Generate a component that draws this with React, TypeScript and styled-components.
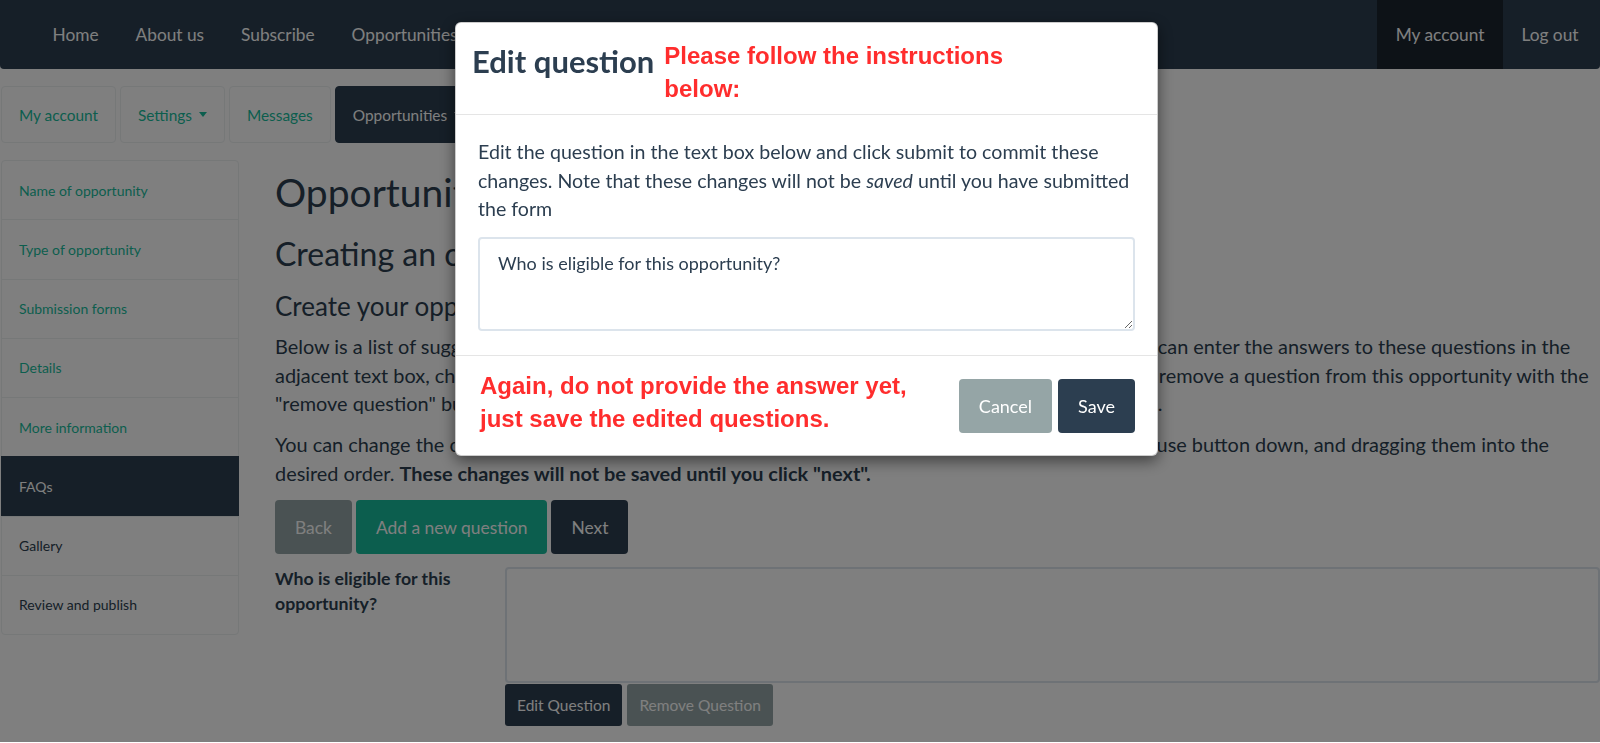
import React from "react";
import styled, { createGlobalStyle } from "styled-components";

const Global = createGlobalStyle`
  html, body { margin: 0; padding: 0; background: #ffffff; }
  body {
    font-family: Lato, "Noto Sans", "Liberation Sans", sans-serif;
    color: #2c3e50;
    overflow: hidden;
    height: 743px;
  }
  *, *::before, *::after { box-sizing: border-box; }
`;

const Page = styled.div`
  width: 1600px;
  height: 743px;
  display: flex;
  flex-direction: column;
`;

const Navbar = styled.nav`
  height: 69px;
  background: #2c3e50;
  border-radius: 0 0 4px 4px;
  display: flex;
  justify-content: space-between;
  padding: 0 3px 0 34px;
`;

const NavGroup = styled.div`
  display: flex;
`;

const NavLink = styled.a<{ $active?: boolean }>`
  display: flex;
  align-items: center;
  padding: 0 18.5px;
  font-size: 17.3px;
  color: #ffffff;
  text-decoration: none;
  background: ${(p) => (p.$active ? "#1a242f" : "transparent")};
`;

const Tabs = styled.div`
  display: flex;
  gap: 4px;
  margin: 17px 0 0 1px;
`;

const Tab = styled.a<{ $active?: boolean }>`
  height: 57px;
  display: flex;
  align-items: center;
  padding: 0 17px;
  font-size: 15.4px;
  border: 1px solid ${(p) => (p.$active ? "#2c3e50" : "#ecf0f1")};
  border-radius: 4px;
  background: ${(p) => (p.$active ? "#2c3e50" : "#ffffff")};
  color: ${(p) => (p.$active ? "#ffffff" : "#18bc9c")};
  text-decoration: none;
`;

const Caret = styled.span`
  display: inline-block;
  margin-left: 7px;
  border-top: 5px solid currentColor;
  border-left: 4px solid transparent;
  border-right: 4px solid transparent;
`;

const Body = styled.div`
  display: flex;
  margin-top: 17px;
  align-items: flex-start;
`;

const Sidebar = styled.div`
  width: 238px;
  margin-left: 1px;
  display: flex;
  flex-direction: column;
`;

const SideItem = styled.a<{ $tone: "link" | "active" | "plain" }>`
  height: 60.25px;
  display: flex;
  align-items: center;
  padding: 0 17px;
  font-size: 14px;
  text-decoration: none;
  border: 1px solid ${(p) => (p.$tone === "active" ? "#2c3e50" : "#ecf0f1")};
  margin-bottom: -1px;
  background: ${(p) => (p.$tone === "active" ? "#2c3e50" : "#ffffff")};
  color: ${(p) =>
    p.$tone === "active" ? "#ffffff" : p.$tone === "link" ? "#18bc9c" : "#2c3e50"};
  &:first-child { border-radius: 4px 4px 0 0; }
  &:last-child { border-radius: 0 0 4px 4px; margin-bottom: 0; }
`;

const Main = styled.main`
  flex: 1;
  margin-left: 36px;
  min-width: 0;
`;

const H1 = styled.h1`
  font-size: 39px;
  line-height: 43px;
  font-weight: 400;
  margin: 11px 0 0;
  white-space: nowrap;
`;

const H2 = styled.h2`
  font-size: 32px;
  line-height: 35px;
  font-weight: 400;
  margin: 22px 0 0;
  white-space: nowrap;
`;

const H3 = styled.h3`
  font-size: 26px;
  line-height: 29px;
  font-weight: 400;
  margin: 21px 0 11px;
  white-space: nowrap;
`;

const Para = styled.p`
  font-size: 19.9px;
  line-height: 28.6px;
  margin: 0 0 12.4px;
  white-space: nowrap;
`;

const ButtonRow = styled.div`
  display: flex;
  gap: 4px;
  margin-top: 13px;
`;

type Tone = "grey" | "green" | "dark";
const toneBg: Record<Tone, string> = {
  grey: "#95a5a6",
  green: "#18bc9c",
  dark: "#2c3e50",
};

const Btn = styled.button<{ $tone: Tone }>`
  height: 54px;
  padding: 0 20px;
  border: none;
  border-radius: 4px;
  font-family: Lato, "Noto Sans", sans-serif;
  font-size: 17.4px;
  color: #ffffff;
  background: ${(p) => toneBg[p.$tone]};
`;

const SmallBtn = styled.button<{ $tone: Tone }>`
  height: 42px;
  padding: 0 12px;
  border: none;
  border-radius: 3px;
  font-family: Lato, "Noto Sans", sans-serif;
  font-size: 15.5px;
  color: #ffffff;
  background: ${(p) => toneBg[p.$tone]};
`;

const QuestionRow = styled.div`
  display: flex;
  margin-top: 13px;
`;

const QLabel = styled.label`
  width: 230px;
  flex: none;
  font-size: 17.7px;
  font-weight: 700;
  line-height: 25px;
  margin-top: -1px;
`;

const QField = styled.div`
  flex: 1;
  display: flex;
  flex-direction: column;
`;

const PageTextarea = styled.textarea`
  display: block;
  width: 100%;
  height: 116px;
  border: 2px solid #dce4ec;
  border-radius: 4px;
  resize: none;
  background: #fff;
`;

const QButtons = styled.div`
  display: flex;
  gap: 5px;
  margin-top: 1px;
`;

const Backdrop = styled.div`
  position: fixed;
  left: 0;
  top: 0;
  right: 0;
  bottom: 1px;
  background: rgba(0, 0, 0, 0.5);
`;

const Modal = styled.div`
  position: fixed;
  left: 455px;
  top: 22px;
  width: 703px;
  background: #ffffff;
  border: 1px solid rgba(0, 0, 0, 0.2);
  border-radius: 6px;
  box-shadow: 0 5px 15px rgba(0, 0, 0, 0.5);
`;

const ModalHeader = styled.div`
  display: flex;
  align-items: flex-start;
  padding: 16px 16px 9px 16px;
  border-bottom: 1px solid #e5e5e5;
`;

const ModalTitle = styled.h4`
  margin: 3px 0 0;
  font-size: 31px;
  line-height: 38px;
  font-weight: 700;
  color: #2c3e50;
`;

const Annotation = styled.div`
  font-family: "Liberation Sans", Arial, sans-serif;
  font-weight: 700;
  font-size: 24px;
  line-height: 33px;
  color: #ff2d2d;
`;

const HeaderNote = styled(Annotation)`
  margin-left: 10px;
`;

const ModalBody = styled.div`
  padding: 23px 22px 24px 22px;
`;

const ModalText = styled.p`
  margin: 0 0 13px;
  font-size: 19.6px;
  line-height: 28.6px;
  color: #2c3e50;
`;

const ModalTextarea = styled.textarea`
  display: block;
  width: 100%;
  height: 94px;
  border: 2px solid #dce4ec;
  border-radius: 4px;
  padding: 12px 18px;
  font-family: Lato, "Noto Sans", sans-serif;
  font-size: 18px;
  line-height: 25.7px;
  color: #2c3e50;
  background: #fff;
  resize: vertical;
  outline: none;
`;

const ModalFooter = styled.div`
  display: flex;
  align-items: flex-start;
  justify-content: space-between;
  padding: 13px 22px 20px 24px;
  border-top: 1px solid #e5e5e5;
`;

const FooterButtons = styled.div`
  display: flex;
  gap: 6px;
  margin-top: 10px;
`;

const FooterBtn = styled(Btn)`
  font-size: 18px;
`;

export default function App() {
  return (
    <>
      <Global />
      <Page>
        <Navbar>
          <NavGroup>
            <NavLink>Home</NavLink>
            <NavLink>About us</NavLink>
            <NavLink>Subscribe</NavLink>
            <NavLink>Opportunities</NavLink>
          </NavGroup>
          <NavGroup>
            <NavLink $active>My account</NavLink>
            <NavLink>Log out</NavLink>
          </NavGroup>
        </Navbar>
        <Tabs>
          <Tab>My account</Tab>
          <Tab>
            Settings<Caret />
          </Tab>
          <Tab>Messages</Tab>
          <Tab $active>
            Opportunities<Caret />
          </Tab>
        </Tabs>
        <Body>
          <Sidebar>
            <SideItem $tone="link">Name of opportunity</SideItem>
            <SideItem $tone="link">Type of opportunity</SideItem>
            <SideItem $tone="link">Submission forms</SideItem>
            <SideItem $tone="link">Details</SideItem>
            <SideItem $tone="link">More information</SideItem>
            <SideItem $tone="active">FAQs</SideItem>
            <SideItem $tone="plain">Gallery</SideItem>
            <SideItem $tone="plain">Review and publish</SideItem>
          </Sidebar>
          <Main>
            <H1>Opportunity FAQs</H1>
            <H2>Creating an opportunity</H2>
            <H3>Create your opportunity's FAQs</H3>
            <Para>
              Below is a list of suggested questions that are commonly asked about all opportunities like yours. You can enter the answers to these questions in the
              <br />
              adjacent text box, change the wording of any question by using the "edit question" button, or you can remove a question from this opportunity with the
              <br />
              "remove question" button. Questions that you add yourself will always be shown at the end of this list.
            </Para>
            <Para>
              You can change the order in which all of the questions appear by clicking on them, holding the left mouse button down, and dragging them into the
              <br />
              desired order. <b>These changes will not be saved until you click "next".</b>
            </Para>
            <ButtonRow>
              <Btn $tone="grey">Back</Btn>
              <Btn $tone="green">Add a new question</Btn>
              <Btn $tone="dark">Next</Btn>
            </ButtonRow>
            <QuestionRow>
              <QLabel>
                Who is eligible for this
                <br />
                opportunity?
              </QLabel>
              <QField>
                <PageTextarea readOnly />
                <QButtons>
                  <SmallBtn $tone="dark">Edit Question</SmallBtn>
                  <SmallBtn $tone="grey">Remove Question</SmallBtn>
                </QButtons>
              </QField>
            </QuestionRow>
          </Main>
        </Body>
      </Page>
      <Backdrop />
      <Modal>
        <ModalHeader>
          <ModalTitle>Edit question</ModalTitle>
          <HeaderNote>
            Please follow the instructions
            <br />
            below:
          </HeaderNote>
        </ModalHeader>
        <ModalBody>
          <ModalText>
            Edit the question in the text box below and click submit to commit these changes. Note that these changes will not be <i>saved</i> until you have submitted the form
          </ModalText>
          <ModalTextarea defaultValue="Who is eligible for this opportunity?" />
        </ModalBody>
        <ModalFooter>
          <Annotation>
            Again, do not provide the answer yet,
            <br />
            just save the edited questions.
          </Annotation>
          <FooterButtons>
            <FooterBtn $tone="grey">Cancel</FooterBtn>
            <FooterBtn $tone="dark">Save</FooterBtn>
          </FooterButtons>
        </ModalFooter>
      </Modal>
    </>
  );
}
